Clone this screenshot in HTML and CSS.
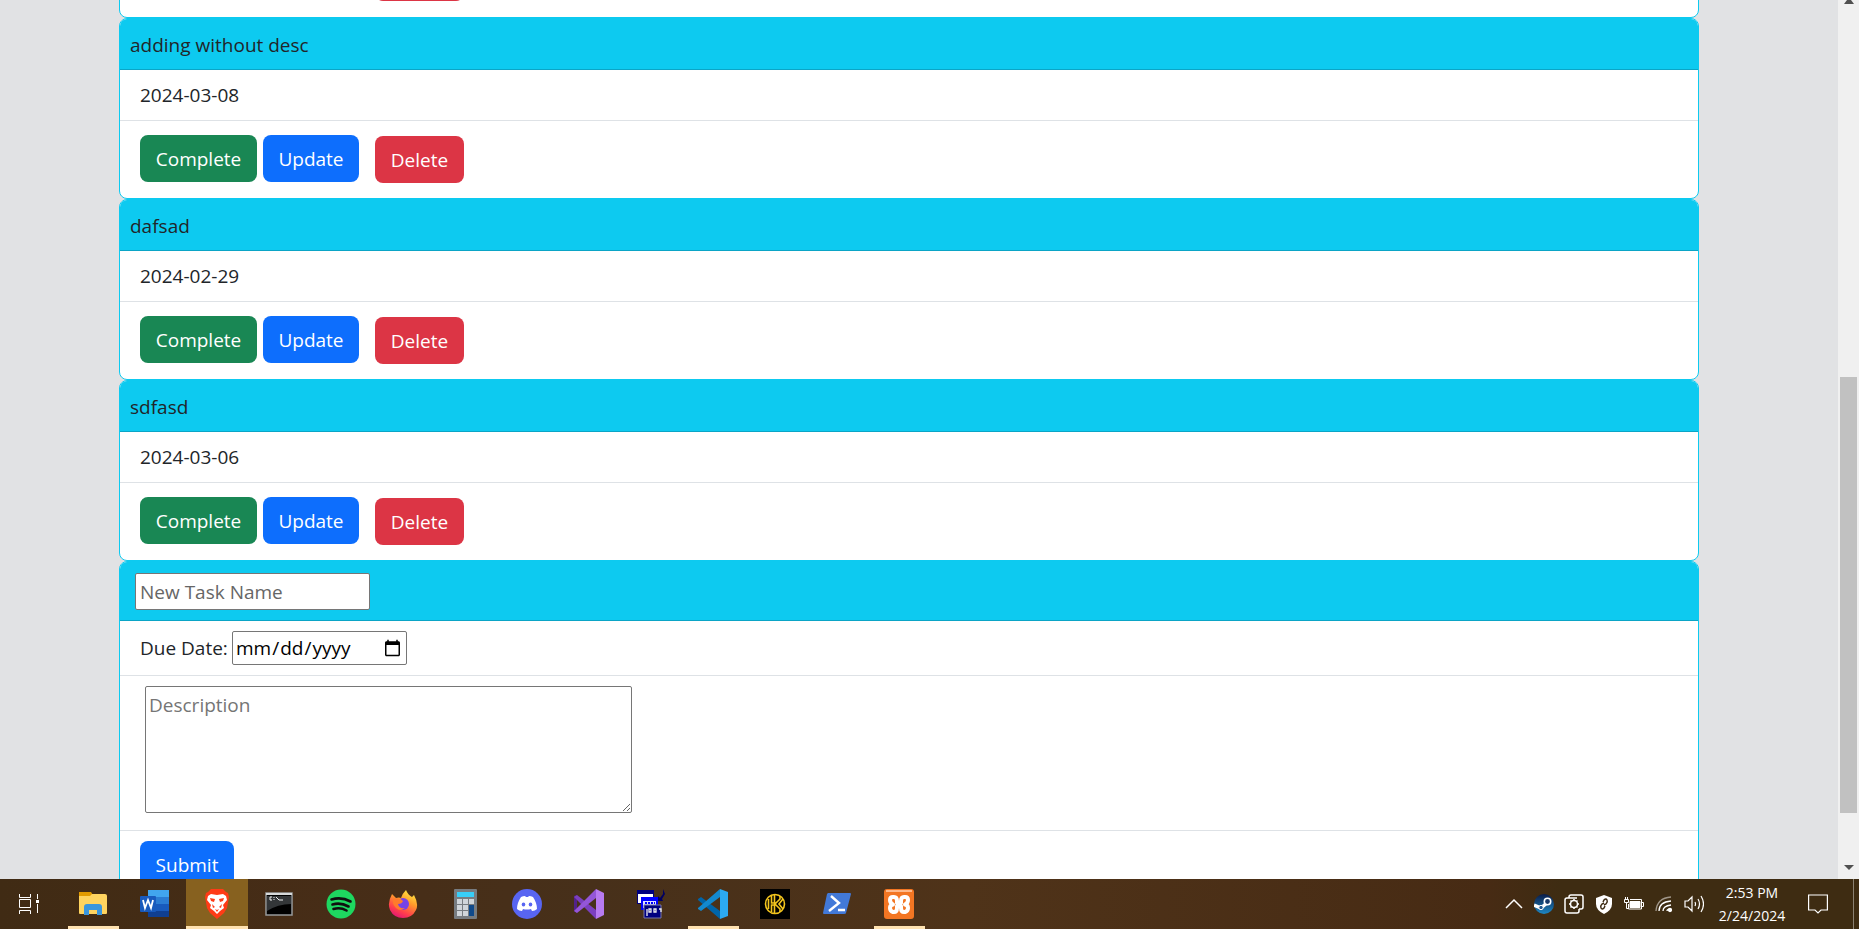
FILE: index.html
```
<!DOCTYPE html>
<html lang="en">
<head>
<meta charset="utf-8">
<title>Tasks</title>
<link rel="stylesheet" href="styles.css">
</head>
<body>
<div class="browser">
  <main class="tasks">
    <section class="card card-scrolled">
      <div class="actions"><button class="btn complete" aria-label="Complete"></button><button class="btn update" aria-label="Update"></button><button class="btn delete" aria-label="Delete"></button></div>
    </section>
    <section class="card">
      <h2 class="card-header">adding without desc</h2>
      <p class="row">2024-03-08</p>
      <div class="actions"><button class="btn complete">Complete</button><button class="btn update">Update</button><button class="btn delete">Delete</button></div>
    </section>
    <section class="card">
      <h2 class="card-header">dafsad</h2>
      <p class="row">2024-02-29</p>
      <div class="actions"><button class="btn complete">Complete</button><button class="btn update">Update</button><button class="btn delete">Delete</button></div>
    </section>
    <section class="card">
      <h2 class="card-header">sdfasd</h2>
      <p class="row">2024-03-06</p>
      <div class="actions"><button class="btn complete">Complete</button><button class="btn update">Update</button><button class="btn delete">Delete</button></div>
    </section>
    <form class="card">
      <div class="card-header form-header"><input class="name" type="text" placeholder="New Task Name" aria-label="New Task Name"></div>
      <div class="row date-row"><label for="due">Due Date:</label><input class="due" id="due" type="date"></div>
      <div class="row desc-row"><textarea class="desc" placeholder="Description" aria-label="Description"></textarea></div>
      <div class="row submit-row"><button class="btn submit" type="button">Submit</button></div>
    </form>
  </main>
  <div class="scrollbar">
    <svg width="10" height="4" viewBox="0 0 10 4"><path d="M0 4L3 0h4l3 4z" fill="#505050"/></svg>
    <div class="thumb"></div>
    <svg width="10" height="5" viewBox="0 0 10 5"><path d="M0 0h10L5 5z" fill="#505050"/></svg>
  </div>
</div>
<footer class="taskbar">
  <nav class="apps">
    <button class="app" aria-label="Task View"><svg width="26" height="20" viewBox="0 0 26 20" fill="none" stroke="#fff"><path d="M1.500 0v3.500h11V0M1.500 20v-3.500h11V20M1.500 5.500h11v8h-11zM19.500 0v5M19.500 10v9"/><path d="M18 6h3v3h-3z" fill="#fff" stroke="none"/></svg></button>
    <button class="app open" aria-label="File Explorer"><svg width="30" height="30" viewBox="0 0 30 30"><path d="M1 3h12l2 3h12q2 0 2 2v16H1z" fill="#e29b00"/><path d="M1 7h11l2-2h13q2 0 2 2v17q0 1-1 1H2q-1 0-1-1z" fill="#ffd45f"/><path d="M6 26v-8q0-3 3-3h12q3 0 3 3v8h-5v-5h-8v5z" fill="#3a96dd"/></svg></button>
    <button class="app" aria-label="Word"><svg width="30" height="30" viewBox="0 0 30 30"><path d="M8 1h21v7H8z" fill="#41a5ee"/><path d="M8 8h21v7H8z" fill="#2b7cd3"/><path d="M8 15h21v7H8z" fill="#185abd"/><path d="M8 22h21v6H8z" fill="#103f91"/><rect y="7" width="16" height="16" rx="1" fill="#185abd"/><path d="M3 11l2 8 3-8 3 8 2-8" fill="none" stroke="#fff" stroke-width="1.800"/></svg></button>
    <button class="app open active" aria-label="Brave"><svg width="30" height="30" viewBox="0 0 30 30"><path d="M9 0h12l3 3 2 1 1 4-2 11-3 5-7 6-7-6-3-5L3 8l1-4 2-1z" fill="#ff3b16"/><path d="M6 7l3-2 6 1 6-1 3 2 1 4-4 5 1 3-4 3-3 3-3-3-4-3 1-3-4-5z" fill="#fff"/><path d="M8 9l5 1-1 3-3-1zM22 9l-5 1 1 3 3-1zM10 15l3 3-2 1zM20 15l-3 3 2 1zM13 20l2 1 2-1-2 3z" fill="#ff3b16"/></svg></button>
    <button class="app" aria-label="Command Prompt"><svg width="30" height="30" viewBox="0 0 30 30"><rect x="2" y="4" width="26" height="22" fill="#000" stroke="#96999b" stroke-width="1.500"/><path d="M2 5h26" stroke="#d7d9da" stroke-width="2"/><path d="M3 7h24v8q-13 0-24 7z" fill="#333638"/><path d="M8 8H6v3h2M10 8v1m0 1v1M12 8l3 3h4" stroke="#eee" fill="none"/></svg></button>
    <button class="app" aria-label="Spotify"><svg width="30" height="30" viewBox="0 0 30 30"><circle cx="15" cy="15" r="14.500" fill="#1ed760"/><path d="M5.500 10.500q10-3 19 2M6.500 15.500q8-2.500 16 2M7.500 20q7-2 13 1.500" fill="none" stroke="#101010" stroke-width="2.600" stroke-linecap="round"/></svg></button>
    <button class="app" aria-label="Firefox"><svg width="30" height="30" viewBox="0 0 30 30"><defs><linearGradient id="fx" x1=".8" y1="0" x2=".3" y2="1"><stop offset="0" stop-color="#fff044"/><stop offset=".4" stop-color="#ff9a2b"/><stop offset=".75" stop-color="#ff3f4c"/><stop offset="1" stop-color="#e01575"/></linearGradient></defs><path d="M4 5l4 4q3-1 5 0 1-4 5-8 2 5 6 7l2-2q5 9 2 15-4 8-13 8T2 21Q-1 14 4 5z" fill="url(#fx)"/><circle cx="15" cy="15" r="6" fill="#7543e5"/><path d="M5 10q7-2 10 2-1 3-5 3 1 5 7 4-5 4-9 0-4-4-3-9z" fill="#ff7b2b"/></svg></button>
    <button class="app" aria-label="Calculator"><svg width="30" height="30" viewBox="0 0 30 30"><rect x="4" width="23" height="30" rx="1" fill="#777c81"/><path d="M7 3h17v5H7z" fill="#38cef8"/><path d="M7 10h5v5H7zm6 0h5v5h-5zm6 0h5v5h-5zM7 16h5v5H7zm6 0h5v5h-5zM7 22h5v5H7zm6 0h5v5h-5z" fill="#d0d5da"/><path d="M19 16h5v11h-5z" fill="#104a8b"/></svg></button>
    <button class="app" aria-label="Discord"><svg width="30" height="30" viewBox="0 0 30 30"><circle cx="15" cy="15" r="15" fill="#5865f2"/><path d="M9 8q2-1 4-1l1 1h2l1-1q2 0 4 1 4 6 4 12-2 2-5 2l-1-2q-4 1-8 0l-1 2q-3 0-5-2 0-6 4-12z" fill="#fff"/><ellipse cx="11.500" cy="15.500" rx="1.800" ry="2" fill="#5865f2"/><ellipse cx="18.500" cy="15.500" rx="1.800" ry="2" fill="#5865f2"/></svg></button>
    <button class="app" aria-label="Visual Studio"><svg width="30" height="30" viewBox="0 0 30 30"><path d="M0 7l3-1v18l-3-2z" fill="#52218a"/><path d="M3 6L22 21v9L0 8z" fill="#7b3fbf"/><path d="M3 24L22 9V0L0 22z" fill="#9456d8"/><path d="M22 0l8 4v22l-8 4z" fill="#b77af0"/></svg></button>
    <button class="app" aria-label="Terminal"><svg width="30" height="30" viewBox="0 0 30 30"><path d="M1 1h17v14H1z" fill="#000080"/><path d="M2 5h15v9H2z" fill="#fff"/><path d="M5 8h17v13H5z" fill="#00f"/><path d="M7 12h13v7H7z" fill="#ddf"/><path d="M8 16h17v13H8z" fill="#000080" stroke="#77a"/><path d="M11 27v-7m2 0h2v3h-2zm5 0h2v3h-2zm5 0h2v3" stroke="#eee" stroke-width="1.300" fill="none"/><path d="M9 14h10" stroke="#00f" stroke-width="2" stroke-dasharray="2 1"/><path d="M27 0v5l-3 4-2-2v5h5l-1-2 3-5z" fill="#000060"/></svg></button>
    <button class="app open" aria-label="Visual Studio Code"><svg width="30" height="30" viewBox="0 0 30 30"><path d="M0 10l3-2 19 14v8L0 11z" fill="#0065a9"/><path d="M0 20l3 2L22 8V0L0 19z" fill="#1389cf"/><path d="M22 0l8 3v24l-8 3z" fill="#2caaf2"/></svg></button>
    <button class="app" aria-label="Keeper"><svg width="30" height="30" viewBox="0 0 30 30"><path d="M0 0h30v30H0z" fill="#000"/><g fill="none" stroke="#f4c51d" stroke-width="1.600"><circle cx="15" cy="15" r="9.500"/><path d="M8.500 10v10M11.500 7v7h3V6M11.500 23v-7h3v8M20 7v3l-5 5 5 5v3M23 10l-4 5 4 5"/></g></svg></button>
    <button class="app" aria-label="PowerShell"><svg width="30" height="30" viewBox="0 0 30 30"><path d="M6 4h22q1 0 1 1l-5 19q0 1-2 1H2q-1 0-1-1L5 5z" fill="#4279d8"/><path d="M9 7l8 7-10 8M16 21h7" fill="none" stroke="#fff" stroke-width="2.400"/></svg></button>
    <button class="app open" aria-label="XAMPP"><svg width="30" height="30" viewBox="0 0 30 30"><rect width="30" height="30" rx="3" fill="#f37623"/><path d="M2 1h26v2H2z" fill="#ffb98a"/><path d="M13 12Q13 8 10 8H9Q6 8 6 11T9 15.500Q6 16 6 19T9 23H10Q13 23 13 19V17L17 14V12Q17 8 20 8H21Q24 8 24 11T21 15.500Q24 16 24 19T21 23H20Q17 23 17 19V17L13 14Z" fill="none" stroke="#fff" stroke-width="4" stroke-linejoin="round"/></svg></button>
  </nav>
  <div class="tray">
    <svg width="20" height="20" viewBox="0 0 20 20" fill="none" stroke="#fff" stroke-width="1.500"><path d="M2 14l8-8 8 8"/></svg>
    <svg width="20" height="20" viewBox="0 0 20 20"><defs><linearGradient id="st" x2="0" y2="1"><stop stop-color="#0b1b47"/><stop offset="1" stop-color="#1d88c4"/></linearGradient></defs><circle cx="10" cy="10" r="10" fill="url(#st)"/><path d="M0 11l7 3 7-6" stroke="#fff" stroke-width="3.500" fill="none"/><circle cx="13.500" cy="7.500" r="3.200" fill="#183a69" stroke="#fff" stroke-width="1.600"/><circle cx="7" cy="13.500" r="2.200" fill="#24598f" stroke="#fff"/></svg>
    <svg width="20" height="20" viewBox="0 0 20 20" fill="none" stroke="#fff" stroke-width="1.500"><path d="M5 4V3q0-2 2-2h10q2 0 2 2v10q0 2-2 2h-2M13 4H3Q1 4 1 6v11q0 2 2 2h10q2 0 2-2v-2"/><circle cx="10" cy="10" r="3.500"/><path d="M10 5v2m0 6v2M5 10h2m6 0h2M6.500 6.500l1 1m5 5l1 1M13.500 6.500l-1 1m-5 5l-1 1"/></svg>
    <svg width="20" height="20" viewBox="0 0 20 20"><path d="M10 1l8 3v6q0 6-8 10-8-4-8-10V4z" fill="#fff"/><path d="M9 8l1-2q2-2 3 0t-1 4l-2 1M11 12l-1 2q-2 2-3 0t1-4l2-1" fill="none" stroke="#3e2c14" stroke-width="1.500"/></svg>
    <svg width="20" height="20" viewBox="0 0 20 20" fill="none" stroke="#fff"><path d="M.5 5.500h4v3h-4zM1.500 3v2M3.500 3v2M2.500 9v5.500h2M6 5.500h11.500v9.500H4.500V10M18 8.500h1.500v4H18"/><path d="M6 7.500h10v6H6z" fill="#fff"/></svg>
    <svg width="20" height="20" viewBox="0 0 20 20" fill="none" stroke="#fff" stroke-width="1.300"><path d="M2 17Q3 4 17 3" stroke="#a1978a"/><path d="M5 17q0-9 12-10M9 17q0-5 8-6M13 17q0-2 4-2"/><circle cx="16" cy="16" r="1.500" fill="#fff"/></svg>
    <svg width="20" height="20" viewBox="0 0 20 20" fill="none" stroke="#fff" stroke-width="1.200"><path d="M1 7h3l4-4v14l-4-4H1zM11 8q1 2 0 4M14 5q3 5 0 10M17 2q5 8 0 16"/></svg>
    <div class="clock"><span>2:53 PM</span><span>2/24/2024</span></div>
    <svg class="notice" width="20" height="20" viewBox="0 0 20 20" fill="none" stroke="#fff" stroke-width="1.200"><path d="M.6 1h18.800v15H13l-3 3-3-3H.6z"/></svg>
    <span class="desktop-edge"></span>
  </div>
</footer>
</body>
</html>
```
FILE: styles.css
```
* { box-sizing: border-box; }

body {
  margin: 0;
  height: 100vh;
  display: flex;
  flex-direction: column;
  overflow: hidden;
  font: 19px/30px "Open Sans", "Noto Sans", sans-serif;
  color: #212529;
}

button, input, textarea { font: inherit; }

.browser {
  flex: 1;
  min-height: 0;
  display: flex;
  overflow: hidden;
  background: #e1e2e4;
}

.tasks {
  flex: 1;
  padding: 0 139px 0 119px;
}

.card {
  border: 1px solid #0dcaf0;
  border-radius: 8px;
  background: #fff;
  overflow: hidden;
}

.card-header {
  margin: 0;
  padding: 11px 10px 9px;
  border-bottom: 1px solid #0ba5c6;
  background: #0dcaf0;
  font-size: 19px;
  font-weight: 400;
  line-height: 30px;
}

.row {
  margin: 0;
  padding: 10px 20px;
  border-bottom: 1px solid #dee2e6;
}

.actions {
  display: flex;
  align-items: flex-start;
  gap: 6px;
  padding: 14px 20px 15px;
}

.card-scrolled { margin-top: -62px; }
.card-scrolled .actions { padding-bottom: 16px; }

.btn {
  height: 47px;
  padding: 0;
  border: 0;
  border-radius: 8px;
  color: #fff;
}

.complete { width: 117px; background: #198754; }
.update { width: 96px; background: #0d6efd; }
.delete { width: 89px; margin: 1px 0 0 10px; background: #dc3545; }
.submit { width: 94px; background: #0d6efd; }

.form-header {
  display: flex;
  padding: 11px 15px 10px;
}

.name, .due, .desc {
  border: 1px solid #767676;
  border-radius: 2px;
  background: #fff;
}

.name { width: 235px; height: 37px; padding: 0 4px; }

.date-row { display: flex; align-items: center; gap: 5px; }
.date-row label { width: 87px; white-space: nowrap; }
.due { width: 175px; height: 34px; padding: 0 2px; color: #000; }

.desc-row { padding: 10px 25px 17px; }

.desc {
  display: block;
  width: 487px;
  height: 127px;
  padding: 3px;
  resize: both;
}

.name::placeholder { color: #666; }
.desc::placeholder { color: #757575; }

.submit-row { border: 0; }

.scrollbar {
  width: 21px;
  display: grid;
  grid-template-rows: 4px 373fr 436fr 52fr 5px 9px;
  justify-items: center;
  background: #f0f0f0;
}

.thumb { grid-row: 3; width: 17px; background: #c1c1c1; }
.scrollbar svg:last-child { grid-row: 5; }

.taskbar {
  height: 50px;
  display: flex;
  justify-content: space-between;
  background: linear-gradient(90deg, #402b14, #472d17 18%, #47301a 32%, #4f3319 52%, #472b14 80%, #3e2c12 84%);
  color: #fff;
}

.apps, .tray { display: flex; }

.app {
  width: 62px;
  height: 50px;
  padding: 0;
  border: 0;
  background: none;
  display: grid;
  place-items: center;
}

.open {
  background: linear-gradient(#ffe2b0, #ffe2b0) bottom / 51px 3px no-repeat;
}

.active {
  background-color: #87611f;
  background-size: 100% 3px;
}

.tray { align-items: center; gap: 10px; }

.clock {
  width: 76px;
  display: flex;
  flex-direction: column;
  text-align: center;
  font-size: 14px;
  line-height: 23px;
}

.notice { margin-left: 8px; }

.desktop-edge {
  width: 6px;
  height: 50px;
  margin-left: 15px;
  border-left: 1px solid #8c8272;
}
```
